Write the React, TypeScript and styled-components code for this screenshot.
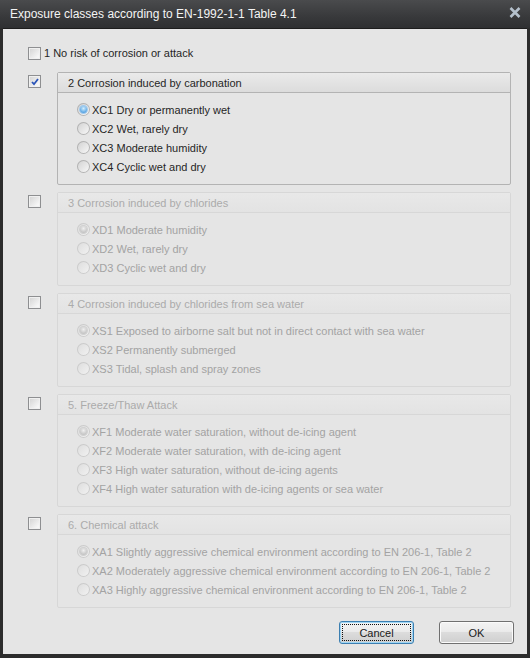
import styled, { createGlobalStyle } from "styled-components";

const GlobalStyle = createGlobalStyle`
    html, body {
        margin: 0;
        padding: 0;
        background: #2b2b2b;
    }
    * {
        box-sizing: border-box;
    }
`;

const StyledWindow = styled.div`
    width: 530px;
    height: 658px;
    background: #2c2c2c;
    display: flex;
    flex-direction: column;
    font-family: "Liberation Sans", Arial, sans-serif;
    font-size: 11px;
`;
const StyledTitleBar = styled.div`
    height: 28px;
    flex: none;
    display: flex;
    align-items: center;
    justify-content: space-between;
    padding: 0 9px 0 10px;
    background: linear-gradient(#4a4b4d, #38393b 60%, #2f3032);
    color: #f4f4f4;
    font-size: 12px;
`;
const StyledClose = styled.span`
    display: flex;
    width: 12px;
    height: 11px;
    margin-top: -3px;
`;
const StyledClient = styled.div`
    flex: 1;
    margin: 0 3px 4px 3px;
    background: #e5e5e5;
    border-top: 1px solid #1d1d1d;
    padding: 17px 13px 10px 25px;
    display: flex;
    flex-direction: column;
    color: #262626;
`;
const StyledRow = styled.div`
    display: flex;
    align-items: flex-start;
    margin-right: 3px;
`;
const StyledPlainRow = styled.div`
    display: flex;
    align-items: center;
    gap: 3px;
    height: 14px;
    margin-bottom: 12px;
`;
const StyledCheckCol = styled.div`
    width: 29px;
    flex: none;
    padding-top: 3px;
`;
const StyledCheckbox = styled.span`
    display: inline-flex;
    align-items: center;
    justify-content: center;
    width: 13px;
    height: 13px;
    border: 1px solid #8e8f91;
    background: linear-gradient(135deg, #d2d2d2, #f6f6f6 80%);
    box-shadow: inset 0 0 0 1px #f0f0f0;
`;
const StyledGroup = styled.div<{ $disabled?: boolean }>`
    flex: 1;
    border: 1px solid ${({ $disabled }) => ($disabled ? "#d7d7d7" : "#b3b3b3")};
    border-radius: 2px;
    margin-bottom: 7px;
    color: ${({ $disabled }) => ($disabled ? "#a3a3a3" : "#262626")};
`;
const StyledGroupHeader = styled.div<{ $disabled?: boolean }>`
    height: 20px;
    display: flex;
    align-items: center;
    padding-left: 10px;
    border-bottom: 1px solid ${({ $disabled }) => ($disabled ? "#d7d7d7" : "#b3b3b3")};
    background: ${({ $disabled }) =>
        $disabled ? "linear-gradient(#e8e8e8, #e3e3e3)" : "linear-gradient(#eaeaea, #dcdcdc)"};
    color: ${({ $disabled }) => ($disabled ? "#ababab" : "#262626")};
`;
const StyledGroupBody = styled.div`
    padding: 7px 0 8px 19px;
    display: flex;
    flex-direction: column;
`;
const StyledOption = styled.div`
    height: 19px;
    display: flex;
    align-items: center;
    gap: 2px;
`;
const StyledRadio = styled.span<{ $disabled?: boolean }>`
    width: 13px;
    height: 13px;
    flex: none;
    border-radius: 50%;
    display: inline-flex;
    align-items: center;
    justify-content: center;
    background: ${({ $disabled }) =>
        $disabled
            ? "linear-gradient(135deg, #dcdcdc, #f3f3f3)"
            : "linear-gradient(135deg, #d0d0d0, #fafafa)"};
    box-shadow: inset 0 0 0 1px ${({ $disabled }) => ($disabled ? "#cbcbcb" : "#b2b2b2")};
`;
const StyledDot = styled.span<{ $disabled?: boolean }>`
    width: 7px;
    height: 7px;
    border-radius: 50%;
    background: ${({ $disabled }) =>
        $disabled
            ? "radial-gradient(circle at 50% 35%, #f0f0f0, #c2c2c2 75%, #b4b4b4)"
            : "radial-gradient(circle at 50% 35%, #d4eefd, #5aa6e4 70%, #3a82cc)"};
    box-shadow: 0 0 0 1px ${({ $disabled }) => ($disabled ? "#d0d0d0" : "#9cc8ee")};
`;
const StyledFooter = styled.div`
    margin-top: auto;
    display: flex;
    justify-content: flex-end;
    gap: 25px;
`;
const StyledButton = styled.button<{ $focused?: boolean }>`
    width: 75px;
    height: 23px;
    padding: 0;
    font-family: "Liberation Sans", Arial, sans-serif;
    font-size: 11px;
    color: #1a1a1a;
    border-radius: 3px;
    border: 1px solid ${({ $focused }) => ($focused ? "#3c7fb1" : "#707070")};
    background: linear-gradient(#f3f3f3 0%, #ebebeb 45%, #dcdcdc 50%, #cfcfcf 100%);
    box-shadow: inset 0 0 0 1px ${({ $focused }) => ($focused ? "#9fd6f5" : "#fbfbfb")};
    outline: ${({ $focused }) => ($focused ? "1px dotted #111" : "none")};
    outline-offset: -4px;
`;

type Option = { code: string; label: string };
type Section = { title: string; options: Option[]; enabled?: boolean };

const sections: Section[] = [
    {
        title: "2 Corrosion induced by carbonation",
        enabled: true,
        options: [
            { code: "XC1", label: "Dry or permanently wet" },
            { code: "XC2", label: "Wet, rarely dry" },
            { code: "XC3", label: "Moderate humidity" },
            { code: "XC4", label: "Cyclic wet and dry" },
        ],
    },
    {
        title: "3 Corrosion induced by chlorides",
        options: [
            { code: "XD1", label: "Moderate humidity" },
            { code: "XD2", label: "Wet, rarely dry" },
            { code: "XD3", label: "Cyclic wet and dry" },
        ],
    },
    {
        title: "4 Corrosion induced by chlorides from sea water",
        options: [
            { code: "XS1", label: "Exposed to airborne salt but not in direct contact with sea water" },
            { code: "XS2", label: "Permanently submerged" },
            { code: "XS3", label: "Tidal, splash and spray zones" },
        ],
    },
    {
        title: "5. Freeze/Thaw Attack",
        options: [
            { code: "XF1", label: "Moderate water saturation, without de-icing agent" },
            { code: "XF2", label: "Moderate water saturation, with de-icing agent" },
            { code: "XF3", label: "High water saturation, without de-icing agents" },
            { code: "XF4", label: "High water saturation with de-icing agents or sea water" },
        ],
    },
    {
        title: "6. Chemical attack",
        options: [
            { code: "XA1", label: "Slightly aggressive chemical environment according to EN 206-1, Table 2" },
            { code: "XA2", label: "Moderately aggressive chemical environment according to EN 206-1, Table 2" },
            { code: "XA3", label: "Highly aggressive chemical environment according to EN 206-1, Table 2" },
        ],
    },
];

const Check = () => (
    <svg width="8" height="8" viewBox="0 0 8 8">
        <path d="M1 4 L3 6.2 L7 1" fill="none" stroke="#2a54b8" strokeWidth="1.8" />
    </svg>
);

const App = () => {
    return (
        <>
            <GlobalStyle />
            <StyledWindow>
                <StyledTitleBar>
                    <span>Exposure classes according to EN-1992-1-1 Table 4.1</span>
                    <StyledClose>
                        <svg width="12" height="11" viewBox="0 0 12 11">
                            <path d="M1.5 1 L10.5 10 M10.5 1 L1.5 10" stroke="#b4c0cc" strokeWidth="2.6" />
                        </svg>
                    </StyledClose>
                </StyledTitleBar>
                <StyledClient>
                    <StyledPlainRow>
                        <StyledCheckbox />
                        <span>1 No risk of corrosion or attack</span>
                    </StyledPlainRow>
                    {sections.map((s) => (
                        <StyledRow key={s.title}>
                            <StyledCheckCol>
                                <StyledCheckbox>{s.enabled && <Check />}</StyledCheckbox>
                            </StyledCheckCol>
                            <StyledGroup $disabled={!s.enabled}>
                                <StyledGroupHeader $disabled={!s.enabled}>{s.title}</StyledGroupHeader>
                                <StyledGroupBody>
                                    {s.options.map((o, i) => (
                                        <StyledOption key={o.code}>
                                            <StyledRadio $disabled={!s.enabled}>
                                                {i === 0 && <StyledDot $disabled={!s.enabled} />}
                                            </StyledRadio>
                                            <span>
                                                {o.code} {o.label}
                                            </span>
                                        </StyledOption>
                                    ))}
                                </StyledGroupBody>
                            </StyledGroup>
                        </StyledRow>
                    ))}
                    <StyledFooter>
                        <StyledButton $focused>Cancel</StyledButton>
                        <StyledButton>OK</StyledButton>
                    </StyledFooter>
                </StyledClient>
            </StyledWindow>
        </>
    );
};

export default App;
